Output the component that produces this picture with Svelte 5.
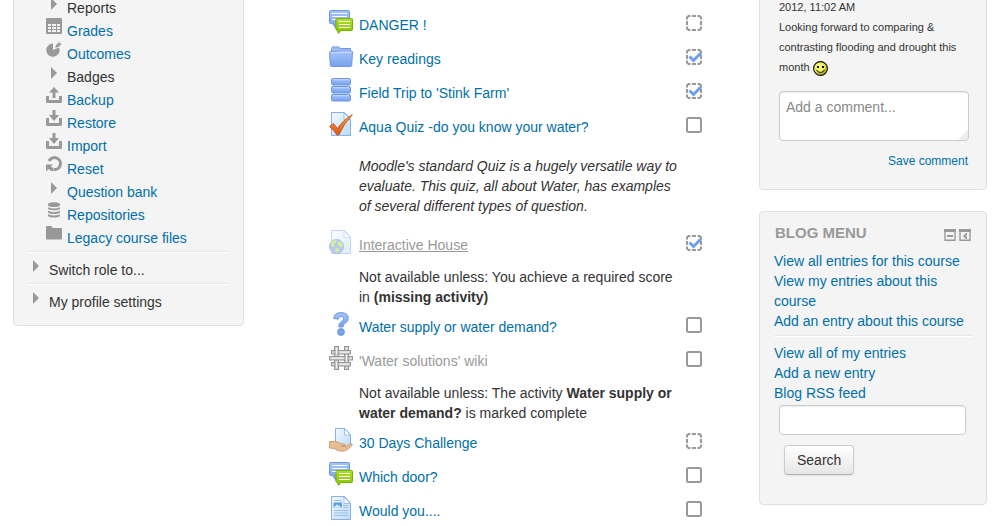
<script>
  const tree = [
    { label: 'Reports', icon: 'arrow', plain: true },
    { label: 'Grades', icon: 'grid' },
    { label: 'Outcomes', icon: 'pie' },
    { label: 'Badges', icon: 'arrow', plain: true },
    { label: 'Backup', icon: 'up' },
    { label: 'Restore', icon: 'down' },
    { label: 'Import', icon: 'down' },
    { label: 'Reset', icon: 'reset' },
    { label: 'Question bank', icon: 'arrow' },
    { label: 'Repositories', icon: 'stack' },
    { label: 'Legacy course files', icon: 'folder' }
  ];
  const branches = ['Switch role to...', 'My profile settings'];

  let activities = $state([
    { label: 'DANGER !', icon: 'forum', auto: true, done: false },
    { label: 'Key readings', icon: 'folder', auto: true, done: true },
    { label: "Field Trip to 'Stink Farm'", icon: 'database', auto: true, done: true },
    {
      label: 'Aqua Quiz -do you know your water?', icon: 'quiz', auto: false, done: false,
      intro: "Moodle's standard Quiz is a hugely versatile way to evaluate. This quiz, all about Water, has examples of several different types of question."
    },
    {
      label: 'Interactive House', icon: 'web', auto: true, done: true, dim: true, underline: true,
      rule: ['Not available unless: You achieve a required score in ', '(missing activity)', '']
    },
    { label: 'Water supply or water demand?', icon: 'choice', auto: false, done: false },
    {
      label: "'Water solutions' wiki", icon: 'wiki', auto: false, done: false, dim: true, locked: true,
      rule: ['Not available unless: The activity ', 'Water supply or water demand?', ' is marked complete']
    },
    { label: '30 Days Challenge', icon: 'assign', auto: true, done: false },
    { label: 'Which door?', icon: 'forum', auto: false, done: false },
    { label: 'Would you....', icon: 'page', auto: false, done: false }
  ]);

  const blogTop = ['View all entries for this course', 'View my entries about this course', 'Add an entry about this course'];
  const blogBottom = ['View all of my entries', 'Add a new entry', 'Blog RSS feed'];
</script>

{#snippet treeIcon(name)}
  <svg class="tree-icon" viewBox="0 0 16 16" fill="#999" aria-hidden="true">
    {#if name === 'arrow'}
      <path d="M5 3L11 9L5 15Z" />
    {:else if name === 'grid'}
      <path d="M1 0H15Q16 0 16 1V15Q16 16 15 16H1Q0 16 0 15V1Q0 0 1 0Z" />
      <path d="M2 6H14V14H2Z" fill="#f4f4f4" />
      <path d="M2 8.5H14M2 11.5H14M5.5 6V14M10.5 6V14" stroke="#999" fill="none" />
    {:else if name === 'pie'}
      <path d="M7 2.6L7 9L13 6.6A6.6 6.6 0 1 1 7 2.6Z" />
      <path d="M9.2 7L11 2.2L12.4 3.2L12.6 .4L15.8 3.6L13.4 4.2L14 5.2Z" />
    {:else if name === 'up'}
      <path d="M0 9H3V13H13V9H16V14.5Q16 16 14.5 16H1.5Q0 16 0 14.5Z" />
      <path d="M8 0L13 5.5H9.5V11H6.5V5.5H3Z" />
    {:else if name === 'down'}
      <path d="M0 8H3V13H13V8H16V14.5Q16 16 14.5 16H1.5Q0 16 0 14.5Z" />
      <path d="M6.5 0H9.5V5H13L8 11L3 5H6.5Z" />
    {:else if name === 'reset'}
      <path d="M3 5A6 6 0 1 1 8 13.5" fill="none" stroke="#999" stroke-width="3" />
      <path d="M0 8.5H7L4.8 10.8L7.5 12V15H5L2.6 13L0 15.5Z" />
    {:else if name === 'stack'}
      <path d="M2 2.3C2-.6 14-.6 14 2.3V3.2C14 5.6 2 5.6 2 3.2Z" />
      <path d="M2 5.2Q8 8 14 5.2V6.6C14 9 2 9 2 6.6ZM2 8.8Q8 11.6 14 8.8V10.2C14 12.6 2 12.6 2 10.2ZM2 12.2Q8 15 14 12.2V13.4C14 16.3 2 16.3 2 13.4Z" />
    {:else}
      <path d="M0 2Q0 1 1 1H5.2L6.7 3H15Q16 3 16 4V13.5Q16 14.5 15 14.5H1Q0 14.5 0 13.5Z" />
    {/if}
  </svg>
{/snippet}

{#snippet sheet()}
  <path d="M2.5.5H15.5L21.5 7V23.5H2.5Z" fill="url(#paper)" stroke="#8ab0e6" />
  <path d="M15 1V7.5H21.5Z" fill="#fff" stroke="#8db2e8" stroke-width=".8" />
{/snippet}

{#snippet activityIcon(item)}
  <svg class="activity-icon" class:faded={item.icon === 'web'} viewBox="0 0 24 24" aria-hidden="true">
    {#if item.icon === 'forum'}
      <path d="M1.5.5H19.5Q20.5.5 20.5 1.5V12.5Q20.5 13.5 19.5 13.5H7V18.5L3.5 13.5H1.5Q.5 13.5.5 12.5V1.5Q.5.5 1.5.5Z" fill="url(#blue)" stroke="#6f97e2" />
      <path d="M3 3.5H18M3 6.5H18M3 9.5H8" stroke="#fff" stroke-width="1.2" />
      <path d="M8.5 8.5H22.5Q23.5 8.5 23.5 9.5V19.5Q23.5 20.5 22.5 20.5H12L9.5 23.5L8.5 20.5Q7 20.5 7 19.5V9.5Q7 8.5 8.5 8.5Z" fill="url(#green)" stroke="#74b204" />
      <path d="M10 11.5H21M10 14.5H21M10 17.5H21" stroke="#fff" stroke-width="1.1" />
    {:else if item.icon === 'folder'}
      <path d="M2.5 7.5V4.5L3.5 2.9H9.5L11.5 4.5H21.5V8Z" fill="#9dbdf5" stroke="#6f97e2" />
      <path d="M.5 8.5Q.5 7.5 1.5 7.5H8.5L9.5 7H22.5Q23.5 7 23.5 8L22.7 21.5Q22.6 22.5 21.5 22.5H2.5Q1.4 22.5 1.3 21.5Z" fill="url(#blue)" stroke="#7199e3" />
      <path d="M1.8 8.9L9 8.6L10 8.1H22.3" fill="none" stroke="#d5e4ff" />
    {:else if item.icon === 'database'}
      {#each [0.5, 8.5, 16.5] as y}
        <rect x="2.5" {y} width="19" height="6.5" rx="1.5" fill="url(#blue)" stroke="#6c96e4" />
        <path d="M4 {y + 1.2}H20" stroke="#c3d8ff" />
      {/each}
    {:else if item.icon === 'quiz'}
      {@render sheet()}
      <path d="M.5 14.5L4.5 11.5L8.5 16.5Q14.5 7.5 23.3 2.8Q15 11.5 10 22.8H7.8Q5 18 .5 14.5Z" fill="url(#orange)" stroke="#b8480c" stroke-width=".8" />
    {:else if item.icon === 'web'}
      {@render sheet()}
      <circle cx="7.5" cy="16.5" r="7" fill="#7196d8" stroke="#5e82cb" />
      <path d="M2 13Q4 9.7 7.5 10.5L6.5 13L4.5 14L5.5 16.5L3 17ZM9.5 11L12.5 12.5L14 16L11.5 17.5L9 14ZM6.5 18L10.5 18.5L8.5 22.3L6.5 22Z" fill="#b4e61e" />
    {:else if item.icon === 'choice'}
      <path d="M4.8 6.5Q5 .6 12 .6Q19.3.6 19.3 6.6Q19.3 9.4 16 11.4Q14 12.6 14 15H9.8Q9.5 11.2 12.5 9.4Q15 8 14.7 6.3Q14.4 4.3 12 4.3Q9.5 4.3 9.3 7.2Z" fill="url(#blue)" stroke="#6991e0" stroke-width=".9" />
      <circle cx="12" cy="20" r="3.4" fill="#7ba3f2" stroke="#5c86dc" stroke-width=".8" />
    {:else if item.icon === 'wiki'}
      <g fill="#d2d2d2" stroke="#959595">
        <rect x="5.5" y=".5" width="4" height="23" />
        <rect x="15.5" y=".5" width="4" height="23" />
        <rect x="2.5" y="4.5" width="19" height="3.5" />
        <rect x=".5" y="10.5" width="23" height="3.5" />
        <rect x="2.5" y="16.5" width="19" height="3.5" />
      </g>
      <path d="M6 4V8.5M9 4V8.5M16 10V14.5M19 10V14.5M6 16V20.5M9 16V20.5" stroke="#959595" />
      <path d="M6.5 4H8.5V8.5H6.5ZM16.5 10H18.5V14.5H16.5ZM6.5 16H8.5V20.5H6.5Z" fill="#d2d2d2" />
      <path d="M7.5 2V8.5M7.5 16V22M17.5 2V3.5M17.5 9V15.5M11 6.2H20M2 12.2H14M11 18.2H20M21 12.2H22.5" stroke="#f4f4f4" />
    {:else if item.icon === 'assign'}
      <path d="M6.5.5H16L21.5 6.5V18.5H6.5Z" fill="url(#paper)" stroke="#8ab0e6" />
      <path d="M15.5 1V7H21.5Z" fill="#fff" stroke="#8db2e8" stroke-width=".8" />
      <path d="M.5 13.5L6 13.3Q9 13.6 11.5 15.5L16 16.3Q17.3 17.3 16 18H12L17.5 18.3L22.5 15.5Q24 16.5 22.8 17.7Q18.5 22.7 14.5 23.2Q8.5 23.7 5.5 20.7L.5 20Z" fill="#e8bd92" stroke="#c4966a" stroke-width=".8" />
    {:else}
      {@render sheet()}
      <path d="M5 4.5H12M5 14.5H19M5 17H19M5 19.5H19" stroke="#9dbcea" />
      <rect x="4.5" y="6.5" width="8.5" height="5" fill="#5f9de0" />
      <path d="M4.5 11.5L8 8.5L13 11.5Z" fill="#d6edff" />
      <path d="M14 9.5H19M14 11.5H19" stroke="#9dbcea" />
    {/if}
  </svg>
{/snippet}

<svg class="defs" aria-hidden="true">
  <defs>
    <linearGradient id="blue" x1="0" y1="0" x2="0" y2="1"><stop offset="0" stop-color="#a5c4fa" /><stop offset="1" stop-color="#78a1ec" /></linearGradient>
    <linearGradient id="green" x1="0" y1="0" x2="0" y2="1"><stop offset="0" stop-color="#b2de2b" /><stop offset="1" stop-color="#85c400" /></linearGradient>
    <linearGradient id="orange" x1="0" y1="0" x2="0" y2="1"><stop offset="0" stop-color="#f9a25a" /><stop offset="1" stop-color="#e0560c" /></linearGradient>
    <linearGradient id="paper" x1="0" y1="0" x2="1" y2="1"><stop offset="0" stop-color="#f4faff" /><stop offset="1" stop-color="#b9dcf8" /></linearGradient>
    <radialGradient id="smile" cx=".4" cy=".35" r=".65"><stop offset="0" stop-color="#ffff9a" /><stop offset=".6" stop-color="#eee94c" /><stop offset="1" stop-color="#a39a1c" /></radialGradient>
  </defs>
</svg>

<div class="page">
  <nav class="panel cut settings" aria-label="Course administration">
    <ul>
      {#each tree as node}
        <li class="node leaf">
          {@render treeIcon(node.icon)}
          {#if node.plain}<span>{node.label}</span>{:else}<a href="#top">{node.label}</a>{/if}
        </li>
      {/each}
    </ul>
    {#each branches as branch}
      <div class="branch rule">
        <div class="node">{@render treeIcon('arrow')}<span>{branch}</span></div>
      </div>
    {/each}
  </nav>

  <main>
    <ul>
      {#each activities as item}
        <li>
          <div class="activity">
            {@render activityIcon(item)}
            {#if item.locked}
              <span class="name dim">{item.label}</span>
            {:else}
              <a class="name" class:dim={item.dim} class:underline={item.underline} href="#top">{item.label}</a>
            {/if}
            <label class="completion">
              <input type="checkbox" aria-label="Completed: {item.label}" bind:checked={item.done} />
              <svg viewBox="0 0 16 16" fill="none" stroke="#999" stroke-width="2" aria-hidden="true">
                {#if item.auto}
                  <path d="M6 1H10M6 15H10M1 6V10M15 6V10M4.5 1H2.5L1 2.5V4.5M11.5 1H13.5L15 2.5V4.5M4.5 15H2.5L1 13.5V11.5M11.5 15H13.5L15 13.5V11.5" />
                {:else}
                  <rect x="1" y="1" width="14" height="14" rx="1.5" />
                {/if}
                {#if item.done}<path d="M3.5 7.5L7.5 11.5L15 4" stroke="#6f9df2" stroke-width="3" />{/if}
              </svg>
            </label>
          </div>
          {#if item.intro}<p class="intro">{item.intro}</p>{/if}
          {#if item.rule}<p class="restriction">{item.rule[0]}<strong>{item.rule[1]}</strong>{item.rule[2]}</p>{/if}
        </li>
      {/each}
    </ul>
  </main>

  <aside>
    <section class="panel cut comments">
      <p>
        2012, 11:02 AM<br />Looking forward to comparing &amp; contrasting flooding and drought this month
        <svg class="smiley" viewBox="0 0 15 15" role="img" aria-label="smile">
          <circle cx="7.5" cy="7.5" r="6.9" fill="url(#smile)" stroke="#111" stroke-width="1.1" />
          <path d="M4 5H6V7H4ZM9 5H11V7H9Z" fill="#111" />
          <path d="M3.5 8.8Q4.5 11.5 7.5 11.5Q10.5 11.5 11.5 8.8" fill="none" stroke="#111" />
        </svg>
      </p>
      <textarea aria-label="Add a comment" placeholder="Add a comment..."></textarea>
      <div class="save"><a href="#top">Save comment</a></div>
    </section>

    <section class="panel blog">
      <header>
        <h2>BLOG MENU</h2>
        <button class="mini" type="button" aria-label="Hide Blog menu block">
          <svg viewBox="0 0 12 12" aria-hidden="true"><path d="M1 1.5H11V11.3H1Z" fill="none" stroke="#999" stroke-width="1.4" /><path d="M0 0H12V3H0ZM3 6H9V8H3Z" fill="#999" /></svg>
        </button>
        <button class="mini" type="button" aria-label="Dock Blog menu block">
          <svg viewBox="0 0 12 12" aria-hidden="true"><path d="M1 1.5H11V11.3H1Z" fill="none" stroke="#999" stroke-width="1.4" /><path d="M0 0H12V3H0ZM8 4V6L7 7L8 8V10H7L4 7L7 4Z" fill="#999" /></svg>
        </button>
      </header>
      <ul>
        {#each blogTop as entry}<li><a href="#top">{entry}</a></li>{/each}
      </ul>
      <ul class="rule more">
        {#each blogBottom as entry}<li><a href="#top">{entry}</a></li>{/each}
      </ul>
      <form onsubmit={(e) => e.preventDefault()}>
        <input type="text" aria-label="Search blog entries" />
        <button class="search" type="submit">Search</button>
      </form>
    </section>
  </aside>
</div>

<style>
  :global(body) { margin: 0; background: #fff; }
  * { box-sizing: border-box; }
  ul, p, h2 { margin: 0; padding: 0; list-style: none; }
  a { color: #0070a8; text-decoration: none; }
  a:hover { text-decoration: underline; }

  .defs { position: absolute; width: 0; height: 0; }

  .page {
    display: grid;
    grid-template-columns: 231fr 515fr 228fr;
    align-items: start;
    height: 100vh;
    overflow: hidden;
    padding: 0 8px 0 13px;
    font: 14px/20px "Liberation Sans", Arial, sans-serif;
    color: #333;
  }

  .panel {
    background: #f4f4f4;
    border: 1px solid #e1e1e1;
    border-radius: 4px;
    padding: 11px 14px 29px;
  }
  .cut { margin-top: -12px; }
  .rule { border-top: 1px solid #e8e8e8; box-shadow: inset 0 1px #fff; }

  .settings { padding: 7px 14px 12px; }
  .node { display: flex; gap: 5px; height: 23px; }
  .node span, .node a { line-height: 24px; }
  .leaf { padding-left: 18px; }
  .tree-icon { flex: none; width: 16px; height: 16px; margin-top: -1px; }
  .branch { margin-top: 2px; padding-top: 6px; }

  main { padding: 7px 57px 0 85px; }
  .activity { display: flex; align-items: flex-start; height: 34px; padding-top: 3px; }
  .activity-icon { flex: none; width: 24px; height: 24px; }
  .faded { opacity: 0.5; }
  .name { margin: 5px auto 0 6px; }
  .dim { color: #999; }
  .underline { text-decoration: underline; }
  .completion { position: relative; flex: none; width: 16px; height: 16px; margin-top: 5px; }
  .completion svg { display: block; width: 16px; height: 16px; }
  .completion input { position: absolute; inset: 0; width: 16px; height: 16px; margin: 0; opacity: 0; }
  .intro { padding: 13px 17px 11px 30px; font-style: italic; }
  .restriction { padding: 6px 17px 2px 30px; }

  .comments { padding: 8px 17px 18px 19px; font-size: 11px; }
  .smiley { width: 15px; height: 15px; vertical-align: -5px; }
  textarea {
    display: block;
    width: 100%;
    height: 50px;
    margin-top: 14px;
    padding: 5px 6px;
    border: 1px solid #ccc;
    border-radius: 4px;
    background: linear-gradient(135deg, #fff 50%, #eee 50%) right bottom / 10px 10px no-repeat #fff;
    box-shadow: inset 0 1px 1px rgba(0, 0, 0, 0.08);
    font: 14px/20px "Liberation Sans", Arial, sans-serif;
    resize: none;
  }
  textarea::placeholder { color: #888; }
  .save { margin-top: 10px; padding-right: 1px; text-align: right; font-size: 12px; }

  .blog { margin-top: 21px; }
  .blog header { display: flex; align-items: center; gap: 3px; margin-bottom: 8px; padding: 0 1px; }
  h2 { flex: 1; font-size: 15px; line-height: 20px; color: #999; }
  .mini { width: 12px; height: 12px; margin-top: 4px; padding: 0; border: 0; background: none; }
  .mini svg { display: block; width: 12px; height: 12px; }
  .more { margin-top: 4px; padding-top: 7px; }
  form { display: flex; flex-direction: column; align-items: flex-start; gap: 10px; padding: 2px 6px 0 5px; }
  form input {
    width: 100%;
    height: 30px;
    padding: 4px 6px;
    border: 1px solid #ccc;
    border-radius: 4px;
    background: #fff;
    box-shadow: inset 0 1px 1px rgba(0, 0, 0, 0.08);
    font: inherit;
  }
  .search {
    height: 30px;
    margin-left: 5px;
    padding: 0 12px;
    border: 1px solid #ccc;
    border-bottom-color: #b3b3b3;
    border-radius: 4px;
    background: linear-gradient(#fff, #e6e6e6);
    box-shadow: 0 1px 2px rgba(0, 0, 0, 0.08);
    font: inherit;
    color: #333;
  }
</style>
